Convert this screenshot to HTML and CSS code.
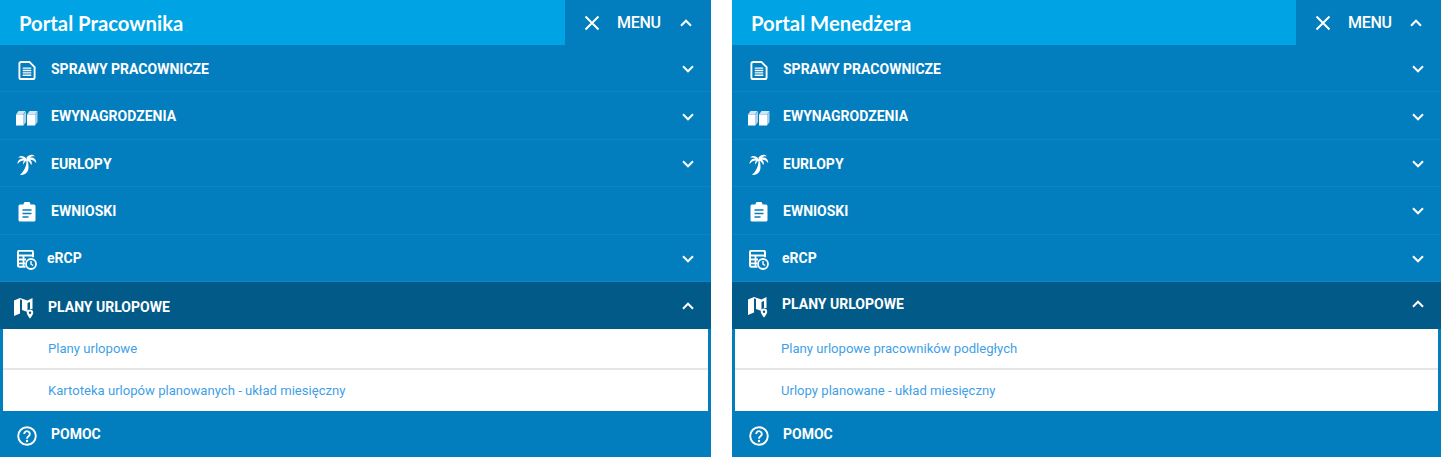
FILE: index.html
```html
<!DOCTYPE html>
<html lang="pl">
<head>
<meta charset="utf-8">
<title>Portale</title>
<link rel="stylesheet" href="styles.css">
</head>
<body>
<svg class="defs" width="0" height="0" aria-hidden="true">
  <defs>
    <symbol id="i-doc" viewBox="0 0 18 20">
      <path d="M3 1h8.500l5.500 5.500v10.500a2 2 0 0 1-2 2h-12a2 2 0 0 1-2-2v-14a2 2 0 0 1 2-2z" fill="none" stroke="#fff" stroke-width="2"/>
      <path d="M4.500 7.500h9M4.500 10h9M4.500 12.500h9M4.500 15h9" stroke="#fff" stroke-width="1.400" fill="none"/>
    </symbol>
    <symbol id="i-money" viewBox="0 0 22 16">
      <path d="M0 4.500l2.500-3.500h7l-2.500 3.500z" fill="#cfe6f5"/>
      <path d="M7.500 4.500l2.500-3.500v11l-2.500 3.500z" fill="#a8d2ec"/>
      <path d="M0 4.500h7.500v11h-7.500z" fill="#fff"/>
      <path d="M11 4.500l2.500-3.500h8l-2.500 3.500z" fill="#cfe6f5"/>
      <path d="M19 4.500l2.500-3.500v11l-2.500 3.500z" fill="#a8d2ec"/>
      <path d="M11 4.500h8v11h-8z" fill="#fff"/>
    </symbol>
    <symbol id="i-palm" viewBox="0 0 20 22">
      <path d="M10 5.500c-2-3.500-6.500-5-9-2c2.200-.3 4 0 5.500 1c-3.200-.2-6 2-6 5.500c2-2.500 4-3.500 6.500-3.500c-.8 1.200-1.200 2.700-.7 4.200c.7-1.700 1.800-3 3-4c.6 5-2.300 10.500-6.300 14.300c5 .2 8.300-2.800 8.500-7.300c.1-2.700-.2-5-.9-7c1.500.7 3 2.400 3.600 4.600c1.200-2.200.5-4.200-1.100-5.600c2.200-.1 4.500 1.100 6 3.400c.6-3.500-2.300-6.300-6-5.600c1.200-1.100 3-1.700 5-1.100c-2.300-2.900-6.500-2-8.600 1.100z" fill="#fff"/>
    </symbol>
    <symbol id="i-clip" viewBox="0 0 18 20">
      <path d="M2 2.500h3.500a3.500 3 0 0 1 7 0h3.500a1.500 1.500 0 0 1 1.500 1.500v14a1.500 1.500 0 0 1-1.500 1.500h-14a1.500 1.500 0 0 1-1.500-1.500v-14a1.500 1.500 0 0 1 1.500-1.500z" fill="#fff"/>
      <path d="M4.500 8h9M4.500 11.500h9M4.500 15h6" stroke="#0a7dbb" stroke-width="1.500" fill="none"/>
    </symbol>
    <symbol id="i-cal" viewBox="0 0 20 20">
      <path d="M8.500 16.800h-6a1.500 1.500 0 0 1-1.500-1.500v-13a1.500 1.500 0 0 1 1.500-1.500h12a1.500 1.500 0 0 1 1.500 1.500v5" fill="none" stroke="#fff" stroke-width="2"/>
      <path d="M1 5.500h15M1 9.500h8M1 13.300h7M6.500 5.500v11" stroke="#fff" stroke-width="1.800" fill="none"/>
      <circle cx="14" cy="14" r="5" fill="none" stroke="#fff" stroke-width="1.800"/>
      <path d="M14 11v3.200l2.200 1.300" fill="none" stroke="#fff" stroke-width="1.400"/>
    </symbol>
    <symbol id="i-map" viewBox="0 0 20 23">
      <path d="M0 3.500l6-2.500v15.500l-6 2.500z" fill="#fff"/>
      <path d="M6 1l7.500 2.500l5-2.500v11h-2.500v-7l-2.500 1v9l-5.500-2v-10l-2-.7z" fill="#fff"/>
      <path d="M16 12.500a3.200 3.200 0 0 1 3.200 3.200c0 2.200-3.200 5.800-3.200 5.800s-3.200-3.600-3.200-5.800a3.200 3.200 0 0 1 3.200-3.200z" fill="#fff"/>
      <circle cx="16" cy="15.700" r="1.200" fill="#025a88"/>
    </symbol>
    <symbol id="i-help" viewBox="0 0 20 20">
      <circle cx="10" cy="10" r="8.800" fill="none" stroke="#fff" stroke-width="1.900"/>
      <path d="M7.200 8a2.800 2.800 0 1 1 4.300 2.300c-1 .7-1.500 1.200-1.500 2.400" fill="none" stroke="#fff" stroke-width="1.900"/>
      <circle cx="10" cy="15" r="1.200" fill="#fff"/>
    </symbol>
    <symbol id="i-down" viewBox="0 0 12 8">
      <path d="M1 1.300l5 5 5-5" fill="none" stroke="#fff" stroke-width="2"/>
    </symbol>
    <symbol id="i-up" viewBox="0 0 12 8">
      <path d="M1 6.700l5-5 5 5" fill="none" stroke="#fff" stroke-width="2"/>
    </symbol>
    <symbol id="i-x" viewBox="0 0 16 16">
      <path d="M1.500 1.500l13 13M14.500 1.500l-13 13" fill="none" stroke="#fff" stroke-width="2"/>
    </symbol>
  </defs>
</svg>

<main class="panels">
  <section class="panel panel-left">
    <header class="head">
      <h1 class="title">Portal Pracownika</h1>
      <div class="menu-box">
        <svg class="ico-x"><use href="#i-x"/></svg>
        <span class="menu-label">MENU</span>
        <svg class="chev"><use href="#i-up"/></svg>
      </div>
    </header>
    <div class="row"><svg class="ico ico-doc"><use href="#i-doc"/></svg><span class="label">SPRAWY PRACOWNICZE</span><svg class="chev"><use href="#i-down"/></svg></div>
    <div class="row"><svg class="ico ico-money"><use href="#i-money"/></svg><span class="label">EWYNAGRODZENIA</span><svg class="chev"><use href="#i-down"/></svg></div>
    <div class="row"><svg class="ico ico-palm"><use href="#i-palm"/></svg><span class="label">EURLOPY</span><svg class="chev"><use href="#i-down"/></svg></div>
    <div class="row"><svg class="ico ico-clip"><use href="#i-clip"/></svg><span class="label">EWNIOSKI</span></div>
    <div class="row row-ercp"><svg class="ico ico-cal"><use href="#i-cal"/></svg><span class="label">eRCP</span><svg class="chev"><use href="#i-down"/></svg></div>
    <div class="row row-open"><svg class="ico ico-map"><use href="#i-map"/></svg><span class="label">PLANY URLOPOWE</span><svg class="chev"><use href="#i-up"/></svg></div>
    <ul class="sub">
      <li class="sub-item">Plany urlopowe</li>
      <li class="sub-item">Kartoteka urlopów planowanych - układ miesięczny</li>
    </ul>
    <div class="row row-last"><svg class="ico ico-help"><use href="#i-help"/></svg><span class="label">POMOC</span></div>
  </section>

  <section class="panel panel-right">
    <header class="head">
      <h1 class="title">Portal Menedżera</h1>
      <div class="menu-box">
        <svg class="ico-x"><use href="#i-x"/></svg>
        <span class="menu-label">MENU</span>
        <svg class="chev"><use href="#i-up"/></svg>
      </div>
    </header>
    <div class="row"><svg class="ico ico-doc"><use href="#i-doc"/></svg><span class="label">SPRAWY PRACOWNICZE</span><svg class="chev"><use href="#i-down"/></svg></div>
    <div class="row"><svg class="ico ico-money"><use href="#i-money"/></svg><span class="label">EWYNAGRODZENIA</span><svg class="chev"><use href="#i-down"/></svg></div>
    <div class="row"><svg class="ico ico-palm"><use href="#i-palm"/></svg><span class="label">EURLOPY</span><svg class="chev"><use href="#i-down"/></svg></div>
    <div class="row"><svg class="ico ico-clip"><use href="#i-clip"/></svg><span class="label">EWNIOSKI</span><svg class="chev"><use href="#i-down"/></svg></div>
    <div class="row row-ercp"><svg class="ico ico-cal"><use href="#i-cal"/></svg><span class="label">eRCP</span><svg class="chev"><use href="#i-down"/></svg></div>
    <div class="row row-open"><svg class="ico ico-map"><use href="#i-map"/></svg><span class="label">PLANY URLOPOWE</span><svg class="chev"><use href="#i-up"/></svg></div>
    <ul class="sub">
      <li class="sub-item">Plany urlopowe pracowników podległych</li>
      <li class="sub-item">Urlopy planowane - układ miesięczny</li>
    </ul>
    <div class="row row-last"><svg class="ico ico-help"><use href="#i-help"/></svg><span class="label">POMOC</span></div>
  </section>
</main>
</body>
</html>
```

FILE: styles.css
```css
* { box-sizing: border-box; }
html, body { margin: 0; padding: 0; background: #fff; overflow: hidden; }
body { font-family: Roboto, "Liberation Sans", sans-serif; }
.defs { display: block; height: 0; }

.panels {
  display: grid;
  grid-template-columns: 711px 709px;
  column-gap: 21px;
  height: 457px;
}
.panel {
  background: #027dbd;
  height: 457px;
  overflow: hidden;
  display: flex;
  flex-direction: column;
}

.head { display: flex; height: 45px; flex: none; }
.title {
  margin: 0;
  flex: 1;
  background: #00a3e4;
  color: #fff;
  font: 700 20.3px/46px "Lato", sans-serif;
  padding-left: 19px;
}
.menu-box {
  width: 146px;
  display: flex;
  align-items: center;
  padding-left: 19px;
  padding-right: 19px;
  color: #fff;
}
.panel-right .menu-box { width: 145px; }
.ico-x { width: 16px; height: 16px; flex: none; }
.menu-label {
  font: 500 16px/18px Roboto, sans-serif;
  margin-left: 17px;
  flex: 1;
  letter-spacing: -.3px;
}
.chev { width: 12px; height: 8px; flex: none; }

.row {
  height: 47.4px;
  flex: none;
  display: flex;
  align-items: center;
  padding-left: 17px;
  padding-right: 17px;
  padding-top: 4px;
  border-bottom: 1px solid #0a86c6;
  color: #fff;
}
.ico { flex: none; width: 20px; height: 20px; }
.label {
  flex: 1;
  margin-left: 14px;
  font: 700 14px/18px Roboto, sans-serif;
  position: relative;
  top: -1.4px;
}
.row .chev { position: relative; top: -1px; }

.ico-money { width: 22px; height: 16px; margin-left: -1px; margin-right: -1px; }
.ico-palm { height: 22px; }
.ico-doc { height: 19px; }
.row-ercp .label { margin-left: 10px; }
.panel-right .row-ercp .label { margin-left: 13px; top: -2px; }
.row-ercp .ico { margin-top: 1px; }

.row-open {
  background: #025a88;
  border-bottom: 0;
  padding-left: 14px;
  height: 46.6px;
  padding-top: 6px;
}
.row-open .ico { height: 23px; }
.row-open .chev { top: -2px; }
.panel-right .row-open { padding-top: 0; padding-left: 16px; }
.row-open .label { margin-left: 14px; top: -1px; }
.panel-right .row-open .chev { top: -1px; }
.panel-right .row-open .ico { margin-top: 4px; }

.sub {
  list-style: none;
  margin: 0;
  padding: 0;
  flex: none;
  background: #fff;
  border: 3px solid #027dbd;
  border-top: 0;
  border-bottom: 0;
}
.sub-item {
  height: 41px;
  padding-left: 45px;
  padding-top: 2px;
  display: flex;
  align-items: center;
  color: #3f9fe6;
  font: 400 13.1px/16px Roboto, sans-serif;
  border-bottom: 2px solid #e6e6e6;
}
.panel-right .sub-item { padding-left: 46px; }
.sub-item:last-child { border-bottom: 0; padding-top: 1px; }

.row-last { border-bottom: 0; flex: 1; height: auto; }
.row-last .label { top: -2px; }
```
